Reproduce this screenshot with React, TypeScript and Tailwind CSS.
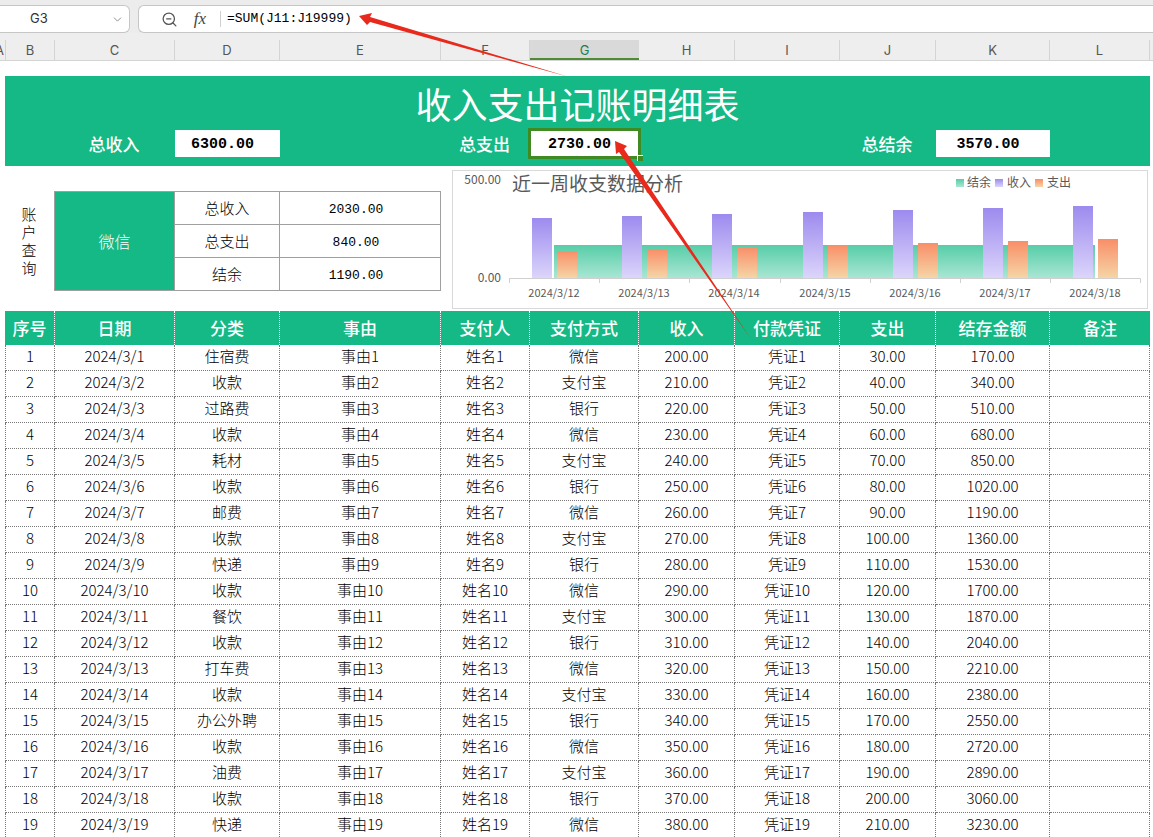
import React, { useState } from "react";
import { ChevronDown, ZoomOut } from "lucide-react";

const sheetCols =
  "grid grid-cols-[50fr_120fr_105fr_161fr_89fr_109fr_96fr_105fr_96fr_114fr_100fr]";

const letters = ["B", "C", "D", "E", "F", "G", "H", "I", "J", "K", "L"];

const columns = [
  { title: "序号", width: "w-[50px]" },
  { title: "日期", width: "w-[120px]" },
  { title: "分类", width: "w-[105px]" },
  { title: "事由", width: "w-[161px]" },
  { title: "支付人", width: "w-[89px]" },
  { title: "支付方式", width: "w-[109px]" },
  { title: "收入", width: "w-[96px]" },
  { title: "付款凭证", width: "w-[105px]" },
  { title: "支出", width: "w-[96px]" },
  { title: "结存金额", width: "w-[114px]" },
  { title: "备注", width: "w-[100px]" },
];

const categories = [
  "住宿费", "收款", "过路费", "收款", "耗材", "收款", "邮费", "收款", "快递", "收款",
  "餐饮", "收款", "打车费", "收款", "办公外聘", "收款", "油费", "收款", "快递",
];
const payments = ["微信", "支付宝", "银行"];

// every entry nets +170, so the balance is a plain multiple
const rows = categories.map((category, i) => {
  const n = i + 1;
  return [
    `${n}`,
    `2024/3/${n}`,
    category,
    `事由${n}`,
    `姓名${n}`,
    payments[i % 3],
    `${190 + n * 10}.00`,
    `凭证${n}`,
    `${20 + n * 10}.00`,
    `${n * 170}.00`,
    "",
  ];
});

const account = [
  { label: "总收入", value: "2030.00" },
  { label: "总支出", value: "840.00" },
  { label: "结余", value: "1190.00" },
];

const days = [12, 13, 14, 15, 16, 17, 18];

const Toolbar: React.FC = () => {
  const [cell, setCell] = useState<string>("G3");
  const [formula, setFormula] = useState<string>("=SUM(J11:J19999)");

  return (
    <div className="flex gap-2 bg-[#ececec] pt-[5px]">
      <div className="flex h-7 w-[130px] items-center rounded-r-md border border-l-0 border-[#c6c6c6] bg-white pr-1">
        <input
          aria-label="名称框"
          value={cell}
          onChange={(e) => setCell(e.target.value)}
          className="w-0 flex-1 bg-transparent pl-[30px] font-['Inter',sans-serif] text-[13px] text-[#333] outline-none"
        />
        <button aria-label="展开名称" className="px-px text-[#777]">
          <ChevronDown size={13} strokeWidth={1.5} />
        </button>
      </div>
      <div className="flex h-7 flex-1 items-center rounded-l-md border border-r-0 border-[#c6c6c6] bg-white pl-[22px]">
        <button aria-label="缩小" className="text-[#555]">
          <ZoomOut size={17} strokeWidth={1.8} />
        </button>
        <button
          aria-label="插入函数"
          className="ml-[14px] w-4 font-['Liberation_Serif',serif] text-[17px] italic text-[#444]"
        >
          fx
        </button>
        <span className="ml-3 h-4 w-px bg-[#d0d0d0]" />
        <input
          aria-label="编辑栏"
          value={formula}
          onChange={(e) => setFormula(e.target.value)}
          className="ml-1.5 flex-1 bg-transparent font-['Liberation_Mono',monospace] text-[13px] text-black outline-none"
        />
      </div>
    </div>
  );
};

const ColumnLetters: React.FC = () => (
  <div className="flex border-b border-[#d4d4d4] bg-[#eee] pt-[7px] pr-[3px] font-['Inter',sans-serif] text-[13px] leading-4 text-[#555]">
    <div className="flex w-[5px] items-center justify-end overflow-hidden pr-px">A</div>
    <div className={`${sheetCols} h-5 flex-1`}>
      {letters.map((l) => (
        <div
          key={l}
          className={
            l === "G"
              ? "flex items-center justify-center border-b-2 border-[#4f8a35] bg-[#d9d9d9] pt-0.5 text-[#1e7f50]"
              : "flex items-center justify-center border-r border-[#d4d4d4] first:border-l"
          }
        >
          {l}
        </div>
      ))}
    </div>
  </div>
);

const Total: React.FC<{ label: string; value: string; start: string; active?: boolean }> = ({
  label,
  value,
  start,
  active,
}) => (
  <>
    <div className={`${start} flex items-center justify-center pr-0.5 text-[17px] font-medium text-white`}>
      {label}
    </div>
    <div
      className={`relative flex items-center justify-center bg-white pt-1 pr-2.5 font-['Liberation_Mono',monospace] text-[15px] font-bold text-black ${
        active ? "outline-3 -outline-offset-1 outline-[#3f8a22]" : ""
      }`}
    >
      {value}
      {active && (
        <span className="absolute -right-1 -bottom-1 size-[6px] border-t border-l border-white bg-[#3f8a22]" />
      )}
    </div>
  </>
);

const Banner: React.FC = () => (
  <header className="bg-[#14b985] pb-[9px]">
    <h1 className="text-center text-[36px] leading-[54px] text-white">
      收入支出记账明细表
    </h1>
    <div className={`${sheetCols} h-[27px]`}>
      <Total label="总收入" value="6300.00" start="col-start-2" />
      <Total label="总支出" value="2730.00" start="col-start-5" active />
      <Total label="总结余" value="3570.00" start="col-start-9" />
    </div>
  </header>
);

const AccountQuery: React.FC = () => (
  <table className="mt-[25px] w-full table-fixed border-separate border-spacing-0 self-start border-t border-l border-[#a0a0a0] text-center text-[15px] font-light">
    <colgroup>
      <col className="w-[120px]" />
      <col className="w-[105px]" />
      <col className="w-[161px]" />
    </colgroup>
    <tbody>
      {account.map((a, i) => (
        <tr key={a.label} className="h-[33px]">
          {i === 0 && (
            <td
              rowSpan={3}
              className="border-r border-b border-[#a0a0a0] bg-[#14b985] p-0 text-base text-white"
            >
              微信
            </td>
          )}
          <th scope="row" className="border-r border-b border-[#a0a0a0] p-0 font-light">
            {a.label}
          </th>
          <td className="border-r border-b border-[#a0a0a0] p-0 pt-1 pr-2 font-['Liberation_Mono',monospace] text-[13px]">
            {a.value}
          </td>
        </tr>
      ))}
    </tbody>
  </table>
);

const WeekChart: React.FC = () => (
  <svg
    viewBox="0 0 696 139"
    role="img"
    aria-label="近一周收支数据分析"
    className="mt-1 w-full self-start"
    fill="#595959"
  >
    <defs>
      <linearGradient id="balance" x1="0" y1="0" x2="0" y2="1">
        <stop offset="0" stopColor="#57cda8" />
        <stop offset="1" stopColor="#a9e6d3" />
      </linearGradient>
      <linearGradient id="income" x1="0" y1="0" x2="0" y2="1">
        <stop offset="0" stopColor="#9d8bee" />
        <stop offset="1" stopColor="#dcd5fb" />
      </linearGradient>
      <linearGradient id="expense" x1="0" y1="0" x2="0" y2="1">
        <stop offset="0" stopColor="#f98e68" />
        <stop offset="1" stopColor="#f5d5a6" />
      </linearGradient>
    </defs>
    <rect x="0.5" y="0.5" width="695" height="138" fill="#fff" stroke="#d9d9d9" />
    <text x="49" y="14" fontSize="12" textAnchor="end">500.00</text>
    <text x="49" y="112" fontSize="12" textAnchor="end">0.00</text>
    <text x="60" y="21" fontSize="19">近一周收支数据分析</text>

    <rect x="504" y="9" width="8" height="8" fill="url(#balance)" />
    <text x="515" y="17" fontSize="12">结余</text>
    <rect x="543" y="9" width="8" height="8" fill="url(#income)" />
    <text x="555" y="17" fontSize="12">收入</text>
    <rect x="583" y="9" width="8" height="8" fill="url(#expense)" />
    <text x="595" y="17" fontSize="12">支出</text>

    <rect x="102" y="75" width="541" height="33" fill="url(#balance)" />
    {days.map((d, i) => {
      const x = 80 + Math.round(i * 90.2);
      return (
        <g key={d}>
          <rect x={x} y={48 - i * 2} width="20" height={60 + i * 2} fill="url(#income)" />
          <rect x={x + 25} y={81 - i * 2} width="20" height={27 + i * 2} fill="url(#expense)" />
          <path d={`M${x - 22.5} 108v5`} stroke="#d0d0d0" />
          <text x={x + 22} y="127" fontSize="11" textAnchor="middle">{`2024/3/${d}`}</text>
        </g>
      );
    })}
    <path d="M57 108.5H688.5v4.5" fill="none" stroke="#d0d0d0" />
  </svg>
);

const Ledger: React.FC = () => (
  <table className="w-full table-fixed border-separate border-spacing-0 text-center text-[15px] font-light">
    <colgroup>
      {columns.map((c) => (
        <col key={c.title} className={c.width} />
      ))}
    </colgroup>
    <thead>
      <tr className="h-[34px] bg-[#14b985] text-[17px] text-white">
        {columns.map((c) => (
          <th
            key={c.title}
            scope="col"
            className="border-r border-dotted border-white p-0 font-medium whitespace-nowrap last:border-r-0"
          >
            {c.title}
          </th>
        ))}
      </tr>
    </thead>
    <tbody>
      {rows.map((r) => (
        <tr key={r[0]} className="h-[26px]">
          {r.map((v, i) => (
            <td
              key={i}
              className="border-r border-b border-dotted border-[#777] p-0 pb-1 leading-5 whitespace-nowrap first:border-l"
            >
              {v}
            </td>
          ))}
        </tr>
      ))}
    </tbody>
  </table>
);

// red pointers from the total cell to its formula and source column
const Arrows: React.FC = () => (
  <svg
    aria-hidden="true"
    width="800"
    height="360"
    fill="#e8291c"
    className="pointer-events-none absolute top-0 left-0"
  >
    <path d="M359 16L372 13L370 17L569 77L370 22L367 25Z" />
    <path d="M615 141L627 146L624 149L751 339L619 152L616 154Z" />
  </svg>
);

export default function App() {
  return (
    <div className="relative min-h-screen overflow-hidden bg-white font-['Noto_Sans_CJK_SC',sans-serif] text-black">
      <Toolbar />
      <ColumnLetters />
      <main className="pt-[15px] pr-[3px] pl-[5px]">
        <Banner />
        <section className="grid h-[145px] grid-cols-[49fr_387fr_11fr_696fr_2fr]">
          <h2 className="mx-auto flex w-4 items-center pt-[5px] text-[15px] leading-[18px] font-light">
            账户查询
          </h2>
          <AccountQuery />
          <span />
          <WeekChart />
        </section>
        <Ledger />
      </main>
      <Arrows />
    </div>
  );
}
